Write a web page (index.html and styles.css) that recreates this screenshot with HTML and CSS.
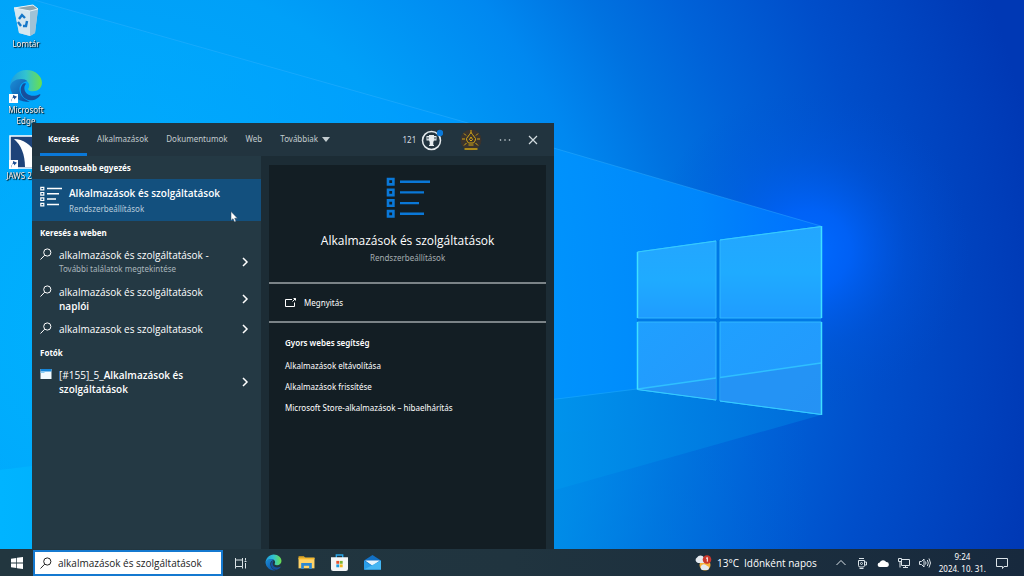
FILE: index.html
```html
<!DOCTYPE html>
<html lang="hu">
<head>
<meta charset="utf-8">
<meta name="viewport" content="width=device-width, initial-scale=1">
<title>Keresés</title>
<link rel="stylesheet" href="styles.css">
</head>
<body>
<svg class="defs" aria-hidden="true">
  <defs>
    <linearGradient id="edgeBlue" x1="0" y1="0" x2="1" y2="1"><stop offset="0" stop-color="#1b8fd8"/><stop offset="1" stop-color="#0c4a9e"/></linearGradient>
    <linearGradient id="edgeGreen" x1="0" y1="0" x2="1" y2="0"><stop offset="0" stop-color="#1d9de0"/><stop offset=".5" stop-color="#32c3d0"/><stop offset="1" stop-color="#6be04a"/></linearGradient>
    <symbol id="edge" viewBox="0 0 32 32">
      <path d="M1 17C1 8 8 1 16.500 1 25 1 31 7 31 13c0 5-4 8-8.500 8-3 0-4.500-1-4.500-2 0-.8 1-1.400 1-3.500 0-3-2.800-5.500-7-5.500C6 10 1.500 13.500 1 17z" fill="url(#edgeGreen)"/>
      <path d="M1 17c.5-4.500 5-7.500 10.500-7.500 2.500 0 4.500.8 5.800 2C12 12 9.500 16 10 20c.6 5 4.500 9 9.500 10.500A15.500 15.500 0 0 1 1 17z" fill="url(#edgeBlue)"/>
      <path d="M13 14c-5 6 0 16 9 15.500 3-.3 6-2.500 7.500-5 .3-.6-.2-1-.8-.7-6.500 3.200-13.500.7-14.200-5-.2-1.800.2-3.600 1.500-5-.9-.7-2.300-.6-3 .2z" fill="#174f9c"/>
    </symbol>
    <symbol id="magnifier" viewBox="0 0 12 12"><g fill="none" stroke="currentColor" stroke-width="1"><circle cx="7.300" cy="4.500" r="3.600"/><path d="M4.700 7.200 .5 11.500"/></g></symbol>
    <symbol id="chevron" viewBox="0 0 8 10"><path d="M2 1l4 4-4 4" fill="none" stroke="currentColor" stroke-width="1.500"/></symbol>
    <symbol id="shortcut" viewBox="0 0 9 9"><path fill="#fff" d="M0 0h9v9H0z"/><path d="M2 8C2 5.500 3 4 5 3.800V5.500L8 2.800 4 1v1.500" fill="#1c4f96"/></symbol>
  </defs>
</svg>

<svg class="wallpaper" viewBox="0 0 1024 576" preserveAspectRatio="xMidYMid slice" aria-hidden="true">
  <defs>
    <radialGradient id="sky" gradientUnits="userSpaceOnUse" cx="100" cy="330" r="950">
      <stop offset="0" stop-color="#00b0ff"/><stop offset=".38" stop-color="#00a0f8"/><stop offset=".53" stop-color="#0088f0"/>
      <stop offset=".62" stop-color="#0072e0"/><stop offset=".7" stop-color="#0062d8"/><stop offset=".82" stop-color="#004eca"/><stop offset="1" stop-color="#0038b4"/>
    </radialGradient>
    <radialGradient id="glow" gradientUnits="userSpaceOnUse" cx="810" cy="250" r="160">
      <stop offset="0" stop-color="#006aff"/><stop offset=".25" stop-color="#0064ff" stop-opacity=".8"/><stop offset=".6" stop-color="#0058e8" stop-opacity=".3"/><stop offset="1" stop-color="#004ed0" stop-opacity="0"/>
    </radialGradient>
    <linearGradient id="beam" x1="0" y1="0" x2="1" y2="0">
      <stop offset="0" stop-color="#00b4ff" stop-opacity=".2"/><stop offset=".6" stop-color="#0098ff" stop-opacity=".75"/><stop offset=".85" stop-color="#008aff" stop-opacity=".9"/><stop offset="1" stop-color="#0074ff" stop-opacity=".8"/>
    </linearGradient>
    <linearGradient id="floor" x1="0" y1="0" x2="1" y2="0">
      <stop offset="0" stop-color="#00b4ff"/><stop offset=".65" stop-color="#0096ec" stop-opacity=".9"/><stop offset="1" stop-color="#0070dc" stop-opacity=".8"/>
    </linearGradient>
    <linearGradient id="lowFloor" x1="0" y1="0" x2="1" y2="0">
      <stop offset="0" stop-color="#00b4ff"/><stop offset=".6" stop-color="#0090e6" stop-opacity=".8"/><stop offset=".9" stop-color="#0062d4" stop-opacity="0"/>
    </linearGradient>
    <linearGradient id="glass" x1="0" y1="0" x2="0" y2="1"><stop offset="0" stop-color="#23a6ff"/><stop offset=".5" stop-color="#1fabff"/><stop offset="1" stop-color="#1f9cff"/></linearGradient>
    <linearGradient id="glassLow" x1="0" y1="0" x2="1" y2="1"><stop offset="0" stop-color="#1fa0ff"/><stop offset="1" stop-color="#2498fc"/></linearGradient>
  </defs>
  <path fill="url(#sky)" d="M0 0h1024v576H0z"/>
  <path fill="url(#lowFloor)" d="M0 470 821 415 900 576H0z"/>
  <path fill="url(#glow)" d="M640 80h384v340H640z"/>
  <path fill="url(#beam)" d="M0-10 34 0 461 121 821 226V415L637 389 0 470z"/>
  <path fill="url(#floor)" d="M0 470 637 389 821 415 555 490 250 576H0z"/>
  <path d="M34 0 461 121 821 226" fill="none" stroke="#38b4ff" stroke-width="1" opacity=".4"/>
  <path d="M300 431 637 389" fill="none" stroke="#20b0ff" stroke-width="1" opacity=".5"/>
  <path fill="#0079e6" d="M637 252 821 226V415L637 389z"/>
  <g stroke="#30b8ff" stroke-width="1">
    <path fill="url(#glass)" d="M637.500 252 716 241V318H637.500z"/>
    <path fill="url(#glass)" d="M720 240 821.500 226.500V318H720z"/>
    <path fill="url(#glassLow)" d="M637.500 322H716V400L637.500 389.500z"/>
    <path fill="url(#glassLow)" d="M720 322H821.500V414.500L720 401z"/>
  </g>
  <path fill="#2590f2" opacity=".75" d="M638 389 716 378V400zM720 377.500 821 363V414L720 400.500z"/>
  <path d="M638 389 716 378M720 377.500 821 363" stroke="#2fc0ff" stroke-width="1.500"/>
  <path d="M637.500 252V318M637.500 322V389.500M821.500 226V318M821.500 322V415" stroke="#3fe0ff" stroke-width="1.500"/>
  <path d="M637.500 252 716 241M720 240 821.500 226.500M720 401 821.500 414.500M637.500 389.500 716 400" stroke="#35ccff" stroke-width="1"/>
</svg>

<div class="screen">
  <main class="desktop">
    <nav class="shortcuts" aria-label="Asztal">
      <a class="shortcut" href="#lomtar">
        <svg class="shortcut-icon" viewBox="0 0 34 34" aria-hidden="true">
          <path d="M5 5 24 2l5 4-3 24-5 3-11-3z" fill="#b9d8e8"/>
          <path d="M5 5l16 2v26l-11-3z" fill="#d5e7f0"/><path d="M21 7l8-1-3 24-5 3z" fill="#9fc2d6"/>
          <path d="M5 5 24 2l5 4-8 2z" fill="#8fa5ae" stroke="#e7f3f8" stroke-width="1"/>
          <g fill="none" stroke="#1678c8" stroke-width="2.400"><path d="M10 16l3-4 3 3"/><path d="M18 18l-1 5h-3"/><path d="M12 23l-3-4"/></g>
        </svg>
        <span class="shortcut-name">Lomtár</span>
      </a>
      <a class="shortcut" href="#edge-app">
        <span class="shortcut-art"><svg class="shortcut-icon" aria-hidden="true"><use href="#edge"/></svg><svg class="shortcut-arrow" aria-hidden="true"><use href="#shortcut"/></svg></span>
        <span class="shortcut-name">Microsoft Edge</span>
      </a>
      <a class="shortcut" href="#jaws">
        <span class="shortcut-art"><svg class="shortcut-icon" viewBox="0 0 34 34" aria-hidden="true"><path fill="#1e4379" stroke="#fff" stroke-width="1.500" d="M1 1h32v32H1z"/><path fill="#fff" d="M5 4c9 0 17 6 22 14v14H16C16 19 12 10 5 4z"/></svg><svg class="shortcut-arrow" aria-hidden="true"><use href="#shortcut"/></svg></span>
        <span class="shortcut-name">JAWS 2024</span>
      </a>
    </nav>

    <section class="search" aria-label="Keresés">
      <header class="search-head">
        <nav class="tabs">
          <a class="tab tab-active" href="#all">Keresés</a>
          <a class="tab" href="#apps">Alkalmazások</a>
          <a class="tab" href="#docs">Dokumentumok</a>
          <a class="tab" href="#web">Web</a>
          <a class="tab" href="#more">Továbbiak <svg class="caret" viewBox="0 0 8 5" aria-hidden="true"><path d="M0 0h8L4 5z" fill="currentColor"/></svg></a>
        </nav>
        <div class="tools">
          <button class="tool rewards" type="button"><span>121</span>
            <svg class="trophy" viewBox="0 0 22 22" aria-hidden="true"><circle cx="10.500" cy="11.500" r="9" fill="none" stroke="#e5ebee" stroke-width="1.500"/><path d="M5.500 7H8V6h5v1h2.500v4.500H13l-.7 1.500v3H13v1H8v-1h.7v-3L8 11.500H5.500z" fill="#e5ebee"/><path d="M6.500 8h1v2.300h-1zM13.500 8h1v2.300h-1z" fill="#22343f"/><circle cx="19" cy="4" r="3.200" fill="#0a78d8"/></svg>
          </button>
          <button class="tool" type="button" aria-label="Profil">
            <svg class="avatar" viewBox="0 0 22 22" aria-hidden="true"><circle cx="11" cy="11" r="10.500" fill="#3a332d"/><g fill="none" stroke="#d5a815" stroke-width="1"><path d="M11 1v3M8.500 14c-1-1.500-2-2-2-4.500L9.500 5.500 11 3.500l1.500 2 3 4c0 2.500-1 3-2 4.500zM8.500 16h5M11 8l-1.500 2.500L11 12l1.500-1.500zM2 10h3M17 10h3M4 4.500l2 2M18 4.500l-2 2M4 16.500l2.500-2.500M18 16.500 15.500 14"/><path d="M4.500 20h13" stroke-width="1.500"/></g></svg>
          </button>
          <button class="tool" type="button" aria-label="Beállítások"><svg class="dots" viewBox="0 0 12 4" aria-hidden="true"><g fill="currentColor"><circle cx="1.500" cy="2" r=".8"/><circle cx="6" cy="2" r=".8"/><circle cx="10.500" cy="2" r=".8"/></g></svg></button>
          <button class="tool" type="button" aria-label="Bezárás"><svg class="close" viewBox="0 0 10 10" aria-hidden="true"><path d="M1 1l8 8M9 1 1 9" stroke="currentColor" stroke-width="1.200"/></svg></button>
        </div>
      </header>

      <div class="search-body">
        <div class="results">
          <h2 class="group">Legpontosabb egyezés</h2>
          <a class="best" href="#best">
            <svg class="best-icon" viewBox="0 0 22 22" aria-hidden="true"><g fill="none" stroke="#fff"><path stroke-width="1.200" d="M.8 1.300h3v2.600h-3zM.8 6.500h3v2.600h-3zM.8 11.900h3v2.600h-3zM.8 17.300h3v2.600h-3z"/><path stroke-width="1.500" d="M7 2.500h15M7 7.700h12M7 13.100h9M7 18.500h12"/></g></svg>
            <span class="best-text"><strong class="best-title">Alkalmazások és szolgáltatások</strong><span class="best-sub">Rendszerbeállítások</span></span>
          </a>
          <h2 class="group">Keresés a weben</h2>
          <a class="hit" href="#w1"><svg class="hit-icon" aria-hidden="true"><use href="#magnifier"/></svg><span class="hit-text"><span class="hit-line">alkalmazások és szolgáltatások -</span><span class="hit-line dim">További találatok megtekintése</span></span><svg class="hit-more" aria-hidden="true"><use href="#chevron"/></svg></a>
          <a class="hit" href="#w2"><svg class="hit-icon" aria-hidden="true"><use href="#magnifier"/></svg><span class="hit-text">alkalmazások és szolgáltatások <b>naplói</b></span><svg class="hit-more" aria-hidden="true"><use href="#chevron"/></svg></a>
          <a class="hit" href="#w3"><svg class="hit-icon" aria-hidden="true"><use href="#magnifier"/></svg><span class="hit-text">alkalmazasok es szolgaltatasok</span><svg class="hit-more" aria-hidden="true"><use href="#chevron"/></svg></a>
          <h2 class="group">Fotók</h2>
          <a class="hit" href="#p1"><svg class="hit-icon" viewBox="0 0 12 12" aria-hidden="true"><path fill="#f3fbff" d="M.5 1h11v10H.5z"/><path fill="#1685d8" d="M.5 1h11v2.500H.5z"/><path fill="#8acdf4" d="M.5 3.500h4V5h-4z"/></svg><span class="hit-text">[#155]_5_<b>Alkalmazások és szolgáltatások</b></span><svg class="hit-more" aria-hidden="true"><use href="#chevron"/></svg></a>
        </div>

        <div class="preview">
          <article class="card">
            <div class="hero">
              <svg class="hero-icon" viewBox="0 0 44 42" aria-hidden="true"><g fill="none" stroke="#0a78d8"><path stroke-width="2.600" d="M2 2h5.400v5.400H2zM2 12.700h5.400v5.400H2zM2 23.400h5.400v5.400H2zM2 34.100h5.400v5.400H2z"/><path stroke-width="2.400" d="M14 4.700h30M14 15.400h24M14 26.100h19M14 36.800h24"/></g></svg>
              <h1 class="hero-title">Alkalmazások és szolgáltatások</h1>
              <p class="hero-sub">Rendszerbeállítások</p>
            </div>
            <a class="open" href="#open"><svg class="open-icon" viewBox="0 0 12 12" aria-hidden="true"><path d="M7 2.500H.5v7h9V5.500M7.500 4.500 10.500 1.500M8.500 1.500h2V3.500" fill="none" stroke="currentColor"/></svg>Megnyitás</a>
            <div class="help">
              <h2 class="help-title">Gyors webes segítség</h2>
              <a class="help-link" href="#h1">Alkalmazások eltávolítása</a>
              <a class="help-link" href="#h2">Alkalmazások frissítése</a>
              <a class="help-link" href="#h3">Microsoft Store-alkalmazások – hibaelhárítás</a>
            </div>
          </article>
        </div>
      </div>
      <svg class="cursor" viewBox="0 0 8 12" aria-hidden="true"><path d="M1 .5v9l2-1.800L4.500 11l1.500-.7L4.700 7.200H7.500z" fill="#fff" stroke="#26425a" stroke-width=".5"/></svg>
    </section>
  </main>

  <footer class="taskbar">
    <button class="start" type="button" aria-label="Start"><svg class="start-icon" viewBox="0 0 12 12" aria-hidden="true"><path fill="#fff" d="M0 1.700 5.300.9v4.700H0zM6 .8 12 0v5.600H6zM0 6.400h5.300v4.700L0 10.300zM6 6.400h6V12l-6-.8z"/></svg></button>
    <div class="query">
      <svg class="query-icon" aria-hidden="true"><use href="#magnifier"/></svg>
      <input class="query-input" type="text" value="alkalmazások és szolgáltatások" aria-label="Keresés" autofocus>
    </div>
    <nav class="apps">
      <button class="app" type="button" aria-label="Feladatnézet"><svg class="app-small" viewBox="0 0 14 12" aria-hidden="true"><path d="M1.500 1v2h7V1M1.500 11.500V9.500h7v2M1.500 3v6.500M8.500 3v6.500M11.500 1v2.500M11.500 6v5.500M10.500 4.500h2" fill="none" stroke="#dbe3e6"/></svg></button>
      <button class="app" type="button" aria-label="Microsoft Edge"><svg class="app-icon" aria-hidden="true"><use href="#edge"/></svg></button>
      <button class="app" type="button" aria-label="Fájlkezelő"><svg class="app-icon" viewBox="0 0 16 16" aria-hidden="true"><path fill="#e8a91c" d="M.5 2h5l1.500 1.500H.5z"/><path fill="#ffd368" d="M.5 3.500h15v10H.5z"/><path fill="#2b87d3" d="M3 8.500h10v5.500h-2.500v-3h-5v3H3z"/><path fill="#f6b92b" d="M.5 3.500h15V5H.5z"/></svg></button>
      <button class="app" type="button" aria-label="Microsoft Store"><svg class="app-icon" viewBox="0 0 16 16" aria-hidden="true"><path d="M5 4V1h6v3" fill="none" stroke="#28a5e8" stroke-width="1.300"/><path fill="#f4f6f7" d="M0 3h16v11q0 2-2 2H2q-2 0-2-2z"/><path fill="#e8502d" d="M5 6.500h2.700v2.700H5z"/><path fill="#7bb32e" d="M8.300 6.500H11v2.700H8.300z"/><path fill="#1d9be0" d="M5 9.800h2.700v2.700H5z"/><path fill="#f2b51c" d="M8.300 9.800H11v2.700H8.300z"/></svg></button>
      <button class="app" type="button" aria-label="Posta"><svg class="app-icon" viewBox="0 0 16 16" aria-hidden="true"><path fill="#1270c4" d="M0 6l8-5 8 5v8.500H0z"/><path fill="#e8f5fc" d="M1 6h14l-7 5z"/><path fill="#2a9de8" d="M0 6l8 5.500L16 6v8.500H0z"/><path fill="#45b6f2" d="M0 14.500 16 6v8.500z"/></svg></button>
    </nav>
    <div class="tray">
      <button class="weather" type="button">
        <svg class="weather-icon" viewBox="0 0 18 16" aria-hidden="true"><circle cx="11" cy="10" r="5.500" fill="#f6b23c"/><path fill="#e4eaf0" d="M4 8a3 3 0 0 1-1-5.500 4 4 0 0 1 7 0A3 3 0 0 1 10 8zM8 15a3 3 0 0 1 0-5 3.500 3.500 0 0 1 5 1 2 2 0 0 1 0 4z"/><circle cx="13" cy="4.500" r="4.300" fill="#c9372c"/><path d="M12 3.500 13.300 2.500v4.200" fill="none" stroke="#fff"/></svg>
        <span>13°C</span><span>Időnként napos</span>
      </button>
      <div class="status">
        <svg class="status-icon" viewBox="0 0 12 12" aria-label="Rejtett ikonok"><path d="M1.500 8 6 3.500 10.500 8"/></svg>
        <svg class="status-icon" viewBox="0 0 12 12" aria-label="Értekezlet"><path d="M2.500 3.500h6v5q0 1.500-1.500 1.500H4q-1.500 0-1.500-1.500zM8.500 5h2v3h-2M3 1.500h5M3.500 11.500h4"/><circle cx="5.500" cy="6.500" r="1"/></svg>
        <svg class="status-icon" viewBox="0 0 12 12" aria-label="OneDrive"><path class="solid" d="M3 10a2.200 2.200 0 0 1-.3-4.400 3.600 3.600 0 0 1 6.500-.6A2.500 2.500 0 0 1 9.500 10z"/></svg>
        <svg class="status-icon" viewBox="0 0 12 12" aria-label="Hálózat"><path d="M3.500 2.500h8V8.500H3.500zM5 10.500h5M7.500 8.500v2M.5 1.500h3v3h-3zM2 4.500V10.500"/></svg>
        <svg class="status-icon" viewBox="0 0 12 12" aria-label="Hangerő"><path d="M.5 4.500h2L5 2v8L2.500 7.500h-2zM6.500 4.500q1 1.500 0 3M8.300 3q2 3 0 6M10 1.500q3 4.500 0 9"/></svg>
      </div>
      <time class="clock" datetime="2024-10-31T09:24"><span>9:24</span><span>2024. 10. 31.</span></time>
      <button class="notices" type="button" aria-label="Értesítések"><svg class="status-icon" viewBox="0 0 12 12" aria-hidden="true"><path d="M.5 1.500h11v8H8L6.500 11.500V9.500h-6z"/></svg></button>
    </div>
  </footer>
</div>
</body>
</html>
```

FILE: styles.css
```css
* { box-sizing: border-box; }

body {
  margin: 0;
  background: #0078e6;
  color: #fff;
  font-family: "Noto Sans", "Open Sans", sans-serif;
  font-size: 8px;
  line-height: 14px;
}

a { color: inherit; text-decoration: none; }
svg { flex: none; }
h1, h2, p { margin: 0; font-weight: 400; }

button {
  display: flex;
  align-items: center;
  justify-content: center;
  padding: 0;
  border: 0;
  background: none;
  color: inherit;
  font: inherit;
}

.defs { position: absolute; width: 0; height: 0; }

.wallpaper {
  position: fixed;
  inset: 0;
  z-index: -1;
  width: 100%;
  height: 100%;
}

.screen {
  display: grid;
  grid-template-rows: 1fr auto;
  height: 100vh;
}

.desktop { position: relative; min-height: 0; }

/* Desktop shortcuts */
.shortcuts {
  display: grid;
  grid-auto-rows: 66px;
  width: 52px;
  padding-top: 3px;
}

.shortcut {
  display: flex;
  flex-direction: column;
  align-items: center;
  gap: 1px;
  line-height: 11px;
  text-align: center;
  text-shadow: 0 0 1px #000, 1px 1px 1px #000;
}

.shortcut-art { position: relative; display: flex; }
.shortcut-icon { width: 34px; height: 34px; }
.shortcut-arrow { position: absolute; left: 0; bottom: 0; width: 9px; height: 9px; }
.shortcut-name { width: 44px; }

/* Search window */
.search {
  position: absolute;
  top: 123px;
  bottom: 0;
  left: 32px;
  display: flex;
  flex-direction: column;
  width: 51%;
  background: #1c2c35;
}

.search-head {
  display: flex;
  justify-content: space-between;
  height: 33px;
  padding: 0 16px 0 8px;
  background: #22343f;
}

.tabs { display: flex; gap: 2px; }

.tab {
  display: flex;
  align-items: center;
  gap: 4px;
  padding: 2px 8px 0;
  border-bottom: 3px solid transparent;
  color: #c3ccd0;
}

.tab-active { border-color: #0a78d8; color: #fff; font-weight: 700; }
.caret { width: 8px; height: 5px; }

.tools { display: flex; align-items: center; gap: 17px; color: #d3dce0; }
.rewards { gap: 5px; }
.trophy, .avatar { width: 22px; height: 22px; }
.dots { width: 12px; height: 4px; }
.close { width: 10px; height: 10px; }

.search-body {
  display: grid;
  flex: 1;
  grid-template-columns: 229px 1fr;
  min-height: 0;
}

.results { background: #243944; }

.group {
  padding-left: 8px;
  font-size: 8px;
  font-weight: 700;
  line-height: 23px;
}

.best {
  display: flex;
  gap: 7px;
  height: 42px;
  padding: 7px 8px;
  background: #13507e;
}

.best-icon { width: 22px; height: 22px; }
.best-text { display: flex; flex-direction: column; gap: 2px; }
.best-title { font-family: "Open Sans", sans-serif; font-size: 10px; font-weight: 600; }
.best-sub { color: #b8cddd; }

.hit {
  display: flex;
  align-items: center;
  gap: 7px;
  padding: 4px 12px 5px 8px;
  font-family: "Open Sans", sans-serif;
  font-size: 10px;
}

.hit b { font-weight: 600; }
.hit-icon { align-self: flex-start; width: 12px; height: 12px; }
.hit-text { flex: 1; padding-right: 24px; }
.hit-line { display: block; white-space: nowrap; }
.hit-more { width: 8px; height: 10px; }
.dim { color: #aab6bc; font-family: "Noto Sans", sans-serif; font-size: 8px; }

.preview { padding: 9px 8px 0; }

.card { height: 100%; background: #131e24; }

.hero {
  display: flex;
  flex-direction: column;
  align-items: center;
  padding: 12px 0 16px;
  border-bottom: 2px solid #7b8387;
}

.hero-icon { width: 44px; height: 42px; }

.hero-title {
  margin-top: 13px;
  font-family: "Open Sans", sans-serif;
  font-size: 12px;
  line-height: 18px;
}

.hero-sub { color: #a5adb1; line-height: 16px; }

.open {
  display: flex;
  align-items: center;
  gap: 7px;
  height: 39px;
  padding: 0 16px;
  border-bottom: 2px solid #7b8387;
}

.open-icon { width: 12px; height: 12px; }

.help { display: flex; flex-direction: column; padding: 10px 16px; }
.help-title { margin-bottom: 2px; font-size: 8px; font-weight: 600; line-height: 20px; }
.help-link { line-height: 21px; }

.cursor { position: absolute; top: 88px; left: 198px; width: 8px; height: 12px; }

/* Taskbar */
.taskbar {
  display: flex;
  height: 27px;
  background: linear-gradient(90deg, #22363f, #20343f 50%, #17293d);
  font-family: "Open Sans", sans-serif;
  font-size: 10px;
}

.start { width: 33px; }
.start-icon { width: 12px; height: 12px; }

.query {
  display: flex;
  align-items: center;
  gap: 6px;
  width: 190px;
  margin-top: 1px;
  padding-left: 5px;
  border: 2px solid #1479d0;
  background: #fff;
  color: #222;
}

.query-icon { width: 12px; height: 12px; }

.query-input {
  flex: 1;
  min-width: 0;
  padding: 0;
  border: 0;
  outline: 0;
  background: none;
  color: #222;
  font: inherit;
}

.apps { display: flex; padding-left: 1px; }
.app { width: 33px; }
.app-icon { width: 17px; height: 17px; }
.app-small { width: 14px; height: 12px; }

.tray { display: flex; align-items: center; margin-left: auto; }
.weather { gap: 5px; margin-right: 18px; }
.weather-icon { width: 18px; height: 16px; }
.status { display: flex; gap: 9px; }

.status-icon {
  width: 12px;
  height: 12px;
  fill: none;
  stroke: #dbe3e8;
}

.solid { fill: #fff; stroke: none; }

.clock {
  display: flex;
  flex-direction: column;
  align-items: center;
  margin-left: 8px;
  font-family: "Noto Sans", sans-serif;
  font-size: 8px;
  line-height: 12px;
}

.notices { width: 32px; margin-right: 6px; }
```
